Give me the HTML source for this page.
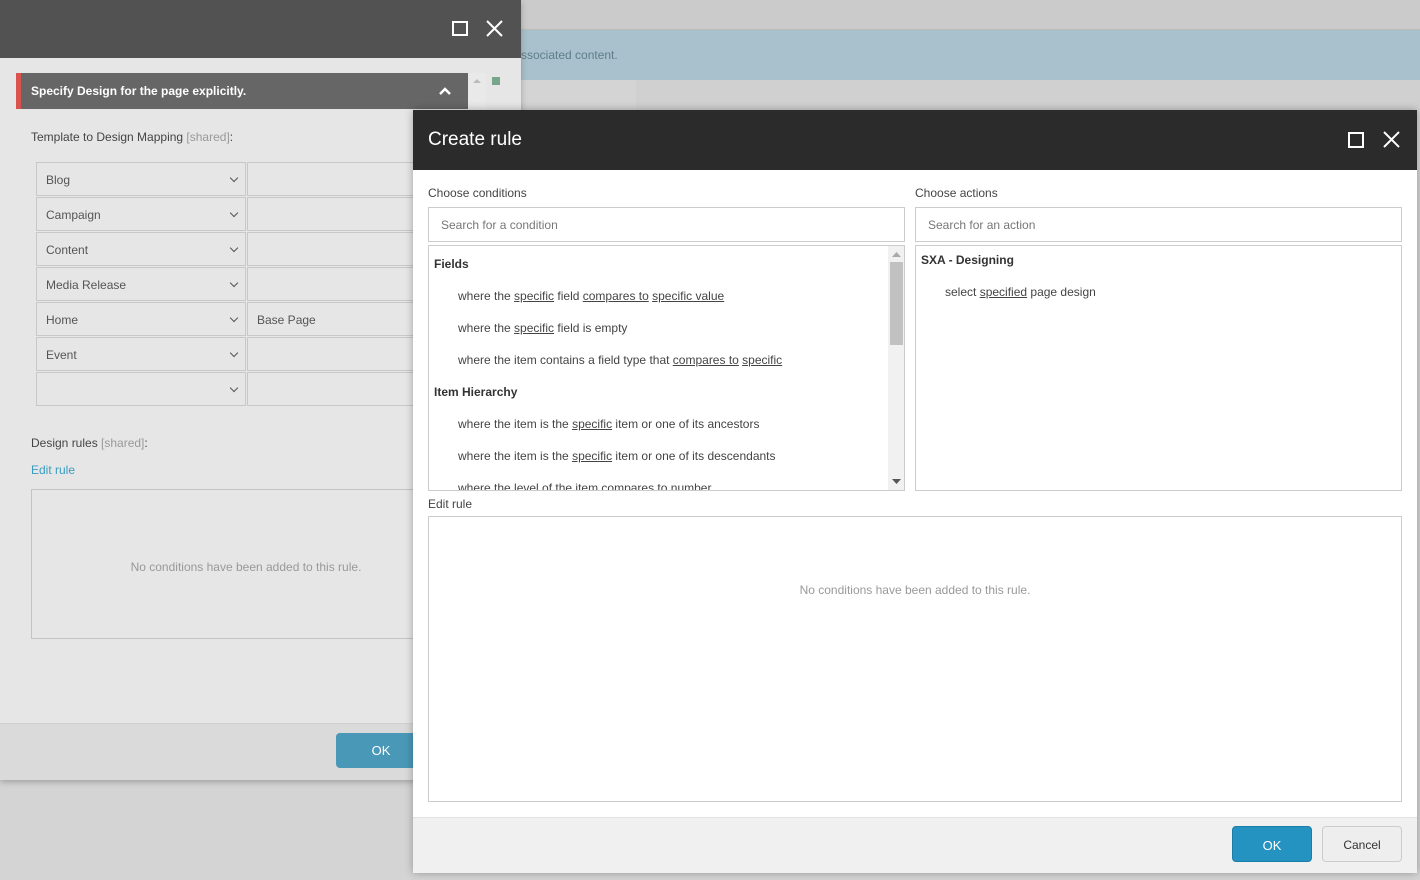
<!DOCTYPE html>
<html><head><style>
*{box-sizing:border-box;margin:0;padding:0}
body{width:1420px;height:880px;position:relative;overflow:hidden;background:#d4d4d4;font-family:"Liberation Sans","DejaVu Sans",sans-serif;font-size:12px;color:#333}
.abs{position:absolute}
u{text-decoration:underline}
.sel{position:absolute;left:36px;width:210px;height:34px;border:1px solid #c8c8c8;background:#e6e6e6;padding:10px 9px;color:#555;font-size:12px}
.sel:after{content:"";position:absolute;right:8px;top:12px;width:5px;height:5px;border-right:1.5px solid #555;border-bottom:1.5px solid #555;transform:rotate(45deg)}
.inp{position:absolute;left:247px;width:170px;height:34px;border:1px solid #c8c8c8;background:#e6e6e6;padding:10px 9px;color:#555}
.cond{position:absolute;left:29px;font-size:12px;color:#444}
.hd{position:absolute;left:5px;font-weight:bold;font-size:12px;color:#333}
</style></head><body>
<div class="abs" style="left:521px;top:0;width:899px;height:30px;background:#cbcbcb;border-bottom:1px solid #bbb"></div>
<div class="abs" style="left:521px;top:30px;width:899px;height:50px;background:#a9c1cc;color:#5f7d8b;font-size:12px;padding:18px 0 0 0">ssociated content.</div>
<div class="abs" style="left:636px;top:80px;width:784px;height:30px;background:#d0d0d0"></div>

<div class="abs" style="left:0;top:0;width:521px;height:780px;background:#e6e6e6;box-shadow:0 2px 6px rgba(0,0,0,.25)">
 <div class="abs" style="left:0;top:0;width:521px;height:58px;background:#525252"></div>
 <div class="abs" style="left:452px;top:21px;width:16px;height:15px;border:2px solid #fff"></div>
 <svg class="abs" style="left:486px;top:20px" width="17" height="17"><path d="M1 1L16 16M16 1L1 16" stroke="#fff" stroke-width="2"/></svg>
 <div class="abs" style="left:16px;top:73px;width:452px;height:36px;background:#666;border-left:5px solid #d9534f;color:#fff;font-weight:bold;font-size:12px;padding:11px 10px">Specify Design for the page explicitly.</div>
 <svg class="abs" style="left:438px;top:86px" width="14" height="10"><path d="M2 8L7 3L12 8" stroke="#fff" stroke-width="2.5" fill="none"/></svg>
 <div class="abs" style="left:468px;top:73px;width:18px;height:650px;background:#e9e9e9"></div>
 <svg class="abs" style="left:472px;top:78px" width="10" height="6"><path d="M1 5L5 1L9 5Z" fill="#bbb"/></svg>
 <div class="abs" style="left:492px;top:77px;width:8px;height:8px;background:#7aa58d"></div>
 <div class="abs" style="left:31px;top:130px;color:#444">Template to Design Mapping <span style="color:#999">[shared]</span>:</div>
 <div class="sel" style="top:162px">Blog</div><div class="inp" style="top:162px"></div>
 <div class="sel" style="top:197px">Campaign</div><div class="inp" style="top:197px"></div>
 <div class="sel" style="top:232px">Content</div><div class="inp" style="top:232px"></div>
 <div class="sel" style="top:267px">Media Release</div><div class="inp" style="top:267px"></div>
 <div class="sel" style="top:302px">Home</div><div class="inp" style="top:302px">Base Page</div>
 <div class="sel" style="top:337px">Event</div><div class="inp" style="top:337px"></div>
 <div class="sel" style="top:372px"></div><div class="inp" style="top:372px"></div>
 <div class="abs" style="left:31px;top:436px;color:#444">Design rules <span style="color:#999">[shared]</span>:</div>
 <div class="abs" style="left:31px;top:463px;color:#3a9bc1">Edit rule</div>
 <div class="abs" style="left:31px;top:489px;width:400px;height:150px;border:1px solid #c4c4c4;color:#999;text-align:center;padding-top:70px;padding-left:30px">No conditions have been added to this rule.</div>
 <div class="abs" style="left:0;top:723px;width:521px;height:57px;background:#dadada;border-top:1px solid #d0d0d0"></div>
 <div class="abs" style="left:336px;top:733px;width:90px;height:35px;background:#4a98b7;border-radius:4px;color:#fff;text-align:center;padding-top:10px;font-size:13px">OK</div>
</div>

<div class="abs" style="left:413px;top:110px;width:1004px;height:763px;background:#fff;box-shadow:0 0 8px rgba(0,0,0,.3)">
 <div class="abs" style="left:0;top:0;width:1004px;height:60px;background:#2b2b2b;color:#fff;font-size:19px;padding:19px 15px">Create rule</div>
 <div class="abs" style="left:935px;top:22px;width:16px;height:16px;border:2px solid #fff"></div>
 <svg class="abs" style="left:970px;top:21px" width="17" height="17"><path d="M1 1L16 16M16 1L1 16" stroke="#fff" stroke-width="2"/></svg>
 <div class="abs" style="left:15px;top:76px;color:#444">Choose conditions</div>
 <div class="abs" style="left:502px;top:76px;color:#444">Choose actions</div>
 <div class="abs" style="left:15px;top:97px;width:477px;height:35px;border:1px solid #ccc;padding:10px 12px;color:#777">Search for a condition</div>
 <div class="abs" style="left:502px;top:97px;width:487px;height:35px;border:1px solid #ccc;padding:10px 12px;color:#777">Search for an action</div>
 <div class="abs" style="left:15px;top:135px;width:477px;height:246px;border:1px solid #ccc;overflow:hidden">
  <div class="hd" style="top:11px">Fields</div>
  <div class="cond" style="top:43px">where the <u>specific</u> field <u>compares to</u> <u>specific value</u></div>
  <div class="cond" style="top:75px">where the <u>specific</u> field is empty</div>
  <div class="cond" style="top:107px">where the item contains a field type that <u>compares to</u> <u>specific</u></div>
  <div class="hd" style="top:139px">Item Hierarchy</div>
  <div class="cond" style="top:171px">where the item is the <u>specific</u> item or one of its ancestors</div>
  <div class="cond" style="top:203px">where the item is the <u>specific</u> item or one of its descendants</div>
  <div class="cond" style="top:235px">where the level of the item compares to number</div>
  <div class="abs" style="left:459px;top:0;width:17px;height:245px;background:#f1f1f1"></div>
  <div class="abs" style="left:461px;top:16px;width:13px;height:83px;background:#c1c1c1"></div>
  <svg class="abs" style="left:463px;top:6px" width="9" height="5"><path d="M0 5L4.5 0L9 5Z" fill="#aaa"/></svg>
  <svg class="abs" style="left:463px;top:233px" width="9" height="5"><path d="M0 0L4.5 5L9 0Z" fill="#555"/></svg>
 </div>
 <div class="abs" style="left:502px;top:135px;width:487px;height:246px;border:1px solid #ccc">
  <div class="hd" style="top:7px">SXA - Designing</div>
  <div class="cond" style="top:39px">select <u>specified</u> page design</div>
 </div>
 <div class="abs" style="left:15px;top:387px;color:#444">Edit rule</div>
 <div class="abs" style="left:15px;top:406px;width:974px;height:286px;border:1px solid #ccc;color:#999;text-align:center;padding-top:66px">No conditions have been added to this rule.</div>
 <div class="abs" style="left:0;top:707px;width:1004px;height:56px;background:#f0f0f0;border-top:1px solid #e2e2e2"></div>
 <div class="abs" style="left:819px;top:716px;width:80px;height:36px;background:#2593c1;border:1px solid #1c7ea8;border-radius:4px;color:#fff;text-align:center;padding-top:11px;font-size:13px">OK</div>
 <div class="abs" style="left:909px;top:716px;width:80px;height:36px;background:#eee;border:1px solid #ccc;border-radius:4px;color:#333;text-align:center;padding-top:11px;font-size:12px">Cancel</div>
</div>
</body></html>
